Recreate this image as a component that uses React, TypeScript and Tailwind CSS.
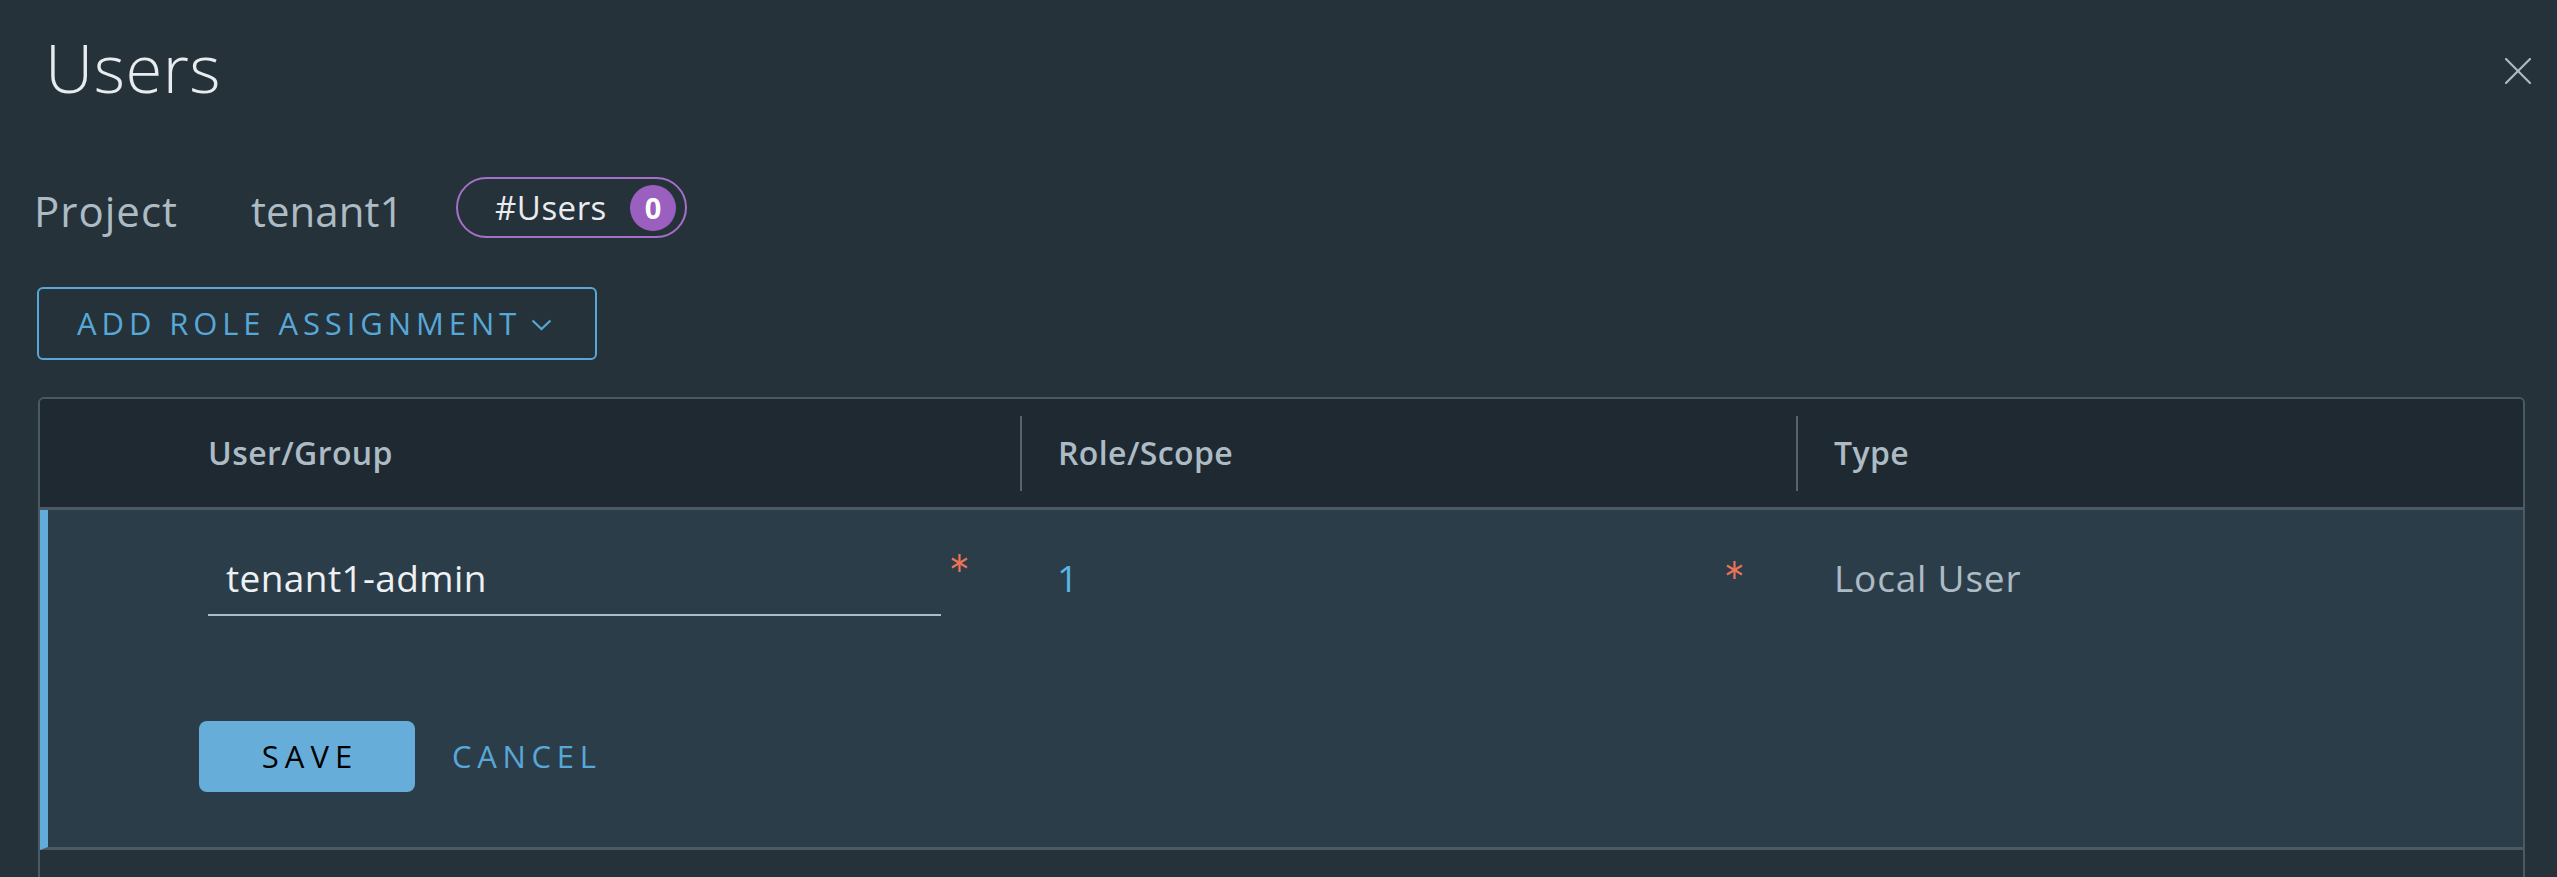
import React from "react";

const Asterisk = () => (
  <svg width="17" height="18" viewBox="0 0 17 18" className="shrink-0">
    <g stroke="#ec7358" strokeWidth="2.2">
      <line x1="8.5" y1="0" x2="8.5" y2="18" />
      <line x1="1" y1="4.5" x2="16" y2="13.5" />
      <line x1="1" y1="13.5" x2="16" y2="4.5" />
    </g>
  </svg>
);

export default function App() {
  return (
    <div className="h-[877px] w-full overflow-hidden bg-[#25323a] font-['Open_Sans',sans-serif]">
      {/* Title bar */}
      <div className="flex h-[135px] items-center justify-between pl-[45px] pr-[26px]">
        <h1 className="text-[67px] font-light leading-none tracking-[0.5px] text-[#e8ecef]">Users</h1>
        <button className="mt-[7px]" aria-label="close">
          <svg width="26" height="26" viewBox="0 0 26 26">
            <g stroke="#adbbc4" strokeWidth="2.2" strokeLinecap="round">
              <line x1="1" y1="1" x2="25" y2="25" />
              <line x1="25" y1="1" x2="1" y2="25" />
            </g>
          </svg>
        </button>
      </div>

      {/* Project row */}
      <div className="mt-[42px] flex h-[61px] items-center pl-[34px]">
        <span className="mt-[6px] w-[217px] text-[42px] leading-none tracking-[1px] text-[#adbbc4]">Project</span>
        <span className="mt-[6px] w-[205px] text-[42px] leading-none text-[#adbbc4]">tenant1</span>
        <div className="flex h-[61px] w-[231px] items-center rounded-full border-2 border-[#a66fc9] pl-[37px] pr-[9px]">
          <span className="text-[33px] leading-none tracking-[0.5px] text-[#e9ecef]">#Users</span>
          <span className="ml-auto flex h-[46px] w-[46px] items-center justify-center rounded-full bg-[#9b5fc0] text-[29px] font-bold leading-none text-white">
            0
          </span>
        </div>
      </div>

      {/* Add role assignment */}
      <div className="ml-[37px] mt-[49px]">
        <button className="flex h-[73px] w-[560px] items-center rounded-[6px] border-2 border-[#57a8d8] pl-[38px] text-[31px] leading-none tracking-[4.9px] text-[#57a8d8]">
          <span>ADD ROLE ASSIGNMENT</span>
          <svg width="21" height="12" viewBox="0 0 21 12" className="ml-[10px] mt-[2px]">
            <polyline points="1.5,1.5 10.5,10 19.5,1.5" fill="none" stroke="#57a8d8" strokeWidth="2.2" />
          </svg>
        </button>
      </div>

      {/* Table */}
      <div className="ml-[38px] mr-[32px] mt-[37px] overflow-hidden rounded-t-[6px] border-2 border-b-0 border-[#4b5965]">
        {/* Header */}
        <div className="grid h-[111px] grid-cols-[130px_850px_776px_1fr] items-center border-b-[3px] border-[#4b5965] bg-[#1e2932] text-[32px] font-semibold leading-none tracking-[0.4px] text-[#adbbc4]">
          <div />
          <div className="pl-[38px]">User/Group</div>
          <div className="flex items-center">
            <span className="h-[75px] w-[2px] bg-[#56646f]" />
            <span className="ml-[36px]">Role/Scope</span>
          </div>
          <div className="flex items-center">
            <span className="h-[75px] w-[2px] bg-[#56646f]" />
            <span className="ml-[36px]">Type</span>
          </div>
        </div>

        {/* Editing row */}
        <div className="flex h-[340px] flex-col border-b-[3px] border-l-[8px] border-b-[#4b5965] border-l-[#62acd9] bg-[#2c3d4a]">
          <div className="grid grid-cols-[122px_850px_776px_1fr] pt-[49px]">
            <div />
            <div className="flex items-start pl-[38px]">
              <div className="w-[733px] border-b-2 border-[#b0bcc4] pb-[18px] pl-[18px] text-[37px] leading-none tracking-[0.4px] text-[#eef1f3]">
                tenant1-admin
              </div>
              <div className="ml-[10px] mt-[-5px]">
                <Asterisk />
              </div>
            </div>
            <div className="flex items-start pl-[37px]">
              <span className="text-[37px] leading-none text-[#5ab4e4]">1</span>
              <div className="ml-auto mr-[53px] mt-[2px]">
                <Asterisk />
              </div>
            </div>
            <div className="pl-[38px] text-[37px] leading-none tracking-[0.8px] text-[#adbbc4]">Local User</div>
          </div>
          <div className="mt-[105px] flex items-center pl-[151px]">
            <button className="flex h-[71px] w-[216px] items-center justify-center rounded-[8px] bg-[#66aed9] pl-[6px] text-[31px] leading-none tracking-[6px] text-black">
              SAVE
            </button>
            <button className="ml-[37px] text-[31px] leading-none tracking-[5.7px] text-[#57a8d8]">CANCEL</button>
          </div>
        </div>

        {/* footer continues */}
        <div className="h-[80px] bg-[#25323a]" />
      </div>
    </div>
  );
}
